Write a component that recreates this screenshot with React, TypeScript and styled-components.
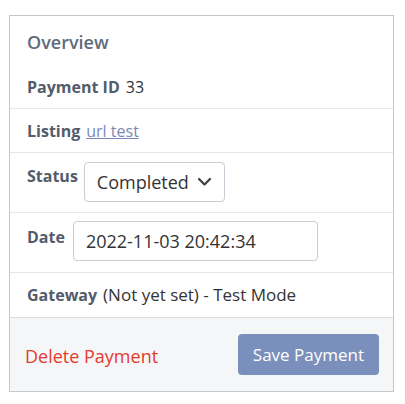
import React from "react";
import styled, { createGlobalStyle } from "styled-components";

const Global = createGlobalStyle`
  html, body { margin: 0; padding: 0; background: #fff; }
  body { font-family: "Segoe UI", "Open Sans", sans-serif; font-size: 16px; color: #333; }
  * { box-sizing: border-box; }
`;

const Page = styled.div`
  padding: 15px 11px 0 9px;
`;

const Card = styled.div`
  width: 385px;
  border: 1px solid #c6c7c9;
  background: #fff;
`;

const Heading = styled.h2`
  margin: 0;
  padding: 14px 17px 0;
  font-size: 18px;
  font-weight: 600;
  line-height: 24px;
  color: #5f6b7c;
`;

const Row = styled.div<{ $pad?: string; $gap?: number; $last?: boolean }>`
  display: flex;
  align-items: flex-start;
  gap: ${(p) => p.$gap ?? 6}px;
  padding: ${(p) => p.$pad ?? "10px 17px 9px"};
  border-bottom: ${(p) => (p.$last ? "none" : "1px solid #e6e7e9")};
  line-height: 24px;
`;

const Label = styled.span<{ $top?: number }>`
  font-weight: 700;
  color: #525c6b;
  padding-top: ${(p) => p.$top ?? 0}px;
`;

const Value = styled.span<{ $size?: number }>`
  color: #333;
  font-size: ${(p) => p.$size ?? 16}px;
`;

const Link = styled.a`
  color: #7a89b8;
  text-decoration: underline;
`;

const Select = styled.div`
  display: flex;
  align-items: center;
  gap: 8px;
  height: 40px;
  padding: 0 12px 0 12px;
  border: 1px solid #cbcdd6;
  border-radius: 4px;
  font-size: 18px;
  color: #333;
`;

const Input = styled.div`
  display: flex;
  align-items: center;
  width: 245px;
  height: 40px;
  padding: 0 12px;
  border: 1px solid #cbcdd6;
  border-radius: 4px;
  font-size: 18px;
  color: #333;
`;

const Footer = styled.div`
  display: flex;
  align-items: center;
  justify-content: space-between;
  height: 74px;
  padding: 0 14px 1px 15px;
  background: #f5f6f7;
  border-top: 1px solid #dcdddf;
`;

const DeleteLink = styled.a`
  color: #e33b2c;
  font-size: 18px;
  padding-top: 4px;
`;

const SaveButton = styled.button`
  height: 41px;
  padding: 0 15px;
  border: none;
  border-radius: 4px;
  background: #7b8fbc;
  color: #fff;
  font-family: inherit;
  font-size: 17px;
`;

const Chevron = () => (
  <svg width="15" height="10" viewBox="0 0 15 10" fill="none">
    <path d="M2 2 L7.5 7.5 L13 2" stroke="#444" strokeWidth="2.3" strokeLinecap="round" strokeLinejoin="round" />
  </svg>
);

export default function App() {
  return (
    <Page>
      <Global />
      <Card>
        <Heading>Overview</Heading>
        <Row $pad="21px 17px 9px">
          <Label>Payment ID</Label>
          <Value>33</Value>
        </Row>
        <Row>
          <Label>Listing</Label>
          <Link>url test</Link>
        </Row>
        <Row $pad="9px 17px 10px">
          <Label $top={2}>Status</Label>
          <Select>
            Completed <Chevron />
          </Select>
        </Row>
        <Row $pad="8px 17px 11px" $gap={8}>
          <Label $top={4}>Date</Label>
          <Input>2022-11-03 20:42:34</Input>
        </Row>
        <Row $last $pad="10px 17px 10px">
          <Label>Gateway</Label>
          <Value $size={17}>(Not yet set) - Test Mode</Value>
        </Row>
        <Footer>
          <DeleteLink>Delete Payment</DeleteLink>
          <SaveButton>Save Payment</SaveButton>
        </Footer>
      </Card>
    </Page>
  );
}
